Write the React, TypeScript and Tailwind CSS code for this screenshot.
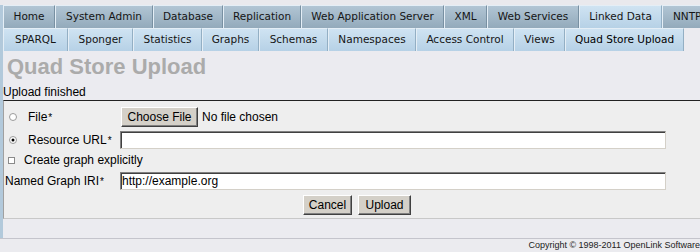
const topTabs = [
  { label: "Home", w: "w-[52px]" },
  { label: "System Admin", w: "w-[98px]" },
  { label: "Database", w: "w-[70px]" },
  { label: "Replication", w: "w-[78px]" },
  { label: "Web Application Server", w: "w-[143px]" },
  { label: "XML", w: "w-[43px]" },
  { label: "Web Services", w: "w-[92px]" },
  { label: "Linked Data", w: "w-[83px]", active: true },
  { label: "NNTP", w: "w-[70px] justify-start pl-[10px]" },
];

const subTabs = [
  { label: "SPARQL", w: "w-[65px]" },
  { label: "Sponger", w: "w-[65px]" },
  { label: "Statistics", w: "w-[69px]" },
  { label: "Graphs", w: "w-[57px]" },
  { label: "Schemas", w: "w-[69px]" },
  { label: "Namespaces", w: "w-[88px]" },
  { label: "Access Control", w: "w-[98px]" },
  { label: "Views", w: "w-[51px]" },
  { label: "Quad Store Upload", w: "w-[119px]", active: true },
];

const light = "bg-gradient-to-b from-[#cfe3f2] to-[#b6d1e6] border-r-[#93afc4]";
const dark = "bg-gradient-to-b from-[#b1c5d4] to-[#93aabb] border-r-[#7890a2]";

function Tab({ label, w, active, sub }: { label: string; w: string; active?: boolean; sub?: boolean }) {
  const tone = sub || active ? light : dark;
  return (
    <div
      className={`${w} ${tone} h-[23px] shrink-0 flex items-center justify-center border-l border-t border-r border-l-[#e4eef6] border-t-[#e4eef6] text-[10.5px] whitespace-nowrap ${
        active && sub ? "text-black" : "text-[#151515]"
      }`}
    >
      {label}
    </div>
  );
}

function Radio({ checked }: { checked?: boolean }) {
  return (
    <svg width="8" height="8" viewBox="0 0 8 8" className="shrink-0">
      <circle cx="4" cy="4" r="3.5" fill="#fff" stroke="#9a9a9a" strokeWidth="1" />
      {checked && <circle cx="4" cy="4" r="1.5" fill="#000" />}
    </svg>
  );
}

// required-field marker
function Req() {
  return <sup className="text-[10px] relative top-[0px] ml-[1px]">*</sup>;
}

const btn =
  "h-[20px] px-0 whitespace-nowrap bg-[#d4d0c8] text-[12px] text-black border border-t-white border-l-white border-r-[#404040] border-b-[#404040] shadow-[inset_-1px_-1px_0_#808080]";
const field =
  "h-[18px] w-[546px] bg-white border border-t-[#808080] border-l-[#808080] border-r-[#d4d0c8] border-b-[#d4d0c8] shadow-[inset_1px_1px_0_#404040] text-[12px] px-[1px] outline-none";

export default function App() {
  return (
    <div className="w-[700px] h-[252px] overflow-hidden bg-[#ebebf0] font-['Liberation_Sans',Arial,sans-serif] text-black">
      <div className="h-[5px] bg-[#e9e9ed]" />
      <div className="h-[233px] border-l-[3px] border-l-[#b2c9db] flex flex-col">
        <div className="flex font-['DejaVu_Sans',Verdana,sans-serif]">
          {topTabs.map((t) => (
            <Tab key={t.label} {...t} />
          ))}
        </div>
        <div className="flex font-['DejaVu_Sans',Verdana,sans-serif]">
          {subTabs.map((t) => (
            <Tab key={t.label} {...t} sub />
          ))}
        </div>

        <h1 className="mt-[4px] pl-[4px] text-[22px] leading-[24px] font-bold text-[#ababab]">Quad Store Upload</h1>
        <div className="mt-[6px] text-[12px] leading-[14px]">Upload finished</div>

        <div className="mt-[1px] bg-[#eeeeee] border-t border-t-[#222] border-l border-l-[#a0a0a0] border-b border-b-[#c8c8c8] pb-[2px] text-[12px]">
          <div className="mt-[5px] h-[22px] flex items-center">
            <div className="w-[116px] flex items-center pl-[5px] gap-[11px]">
              <Radio />
              <span>
                File<Req />
              </span>
            </div>
            <button className={`${btn} ml-[1px] w-[77px]`}>Choose File</button>
            <span className="ml-[4px]">No file chosen</span>
          </div>

          <div className="mt-[1px] h-[22px] flex items-center">
            <div className="w-[116px] flex items-center pl-[5px] gap-[11px]">
              <Radio checked />
              <span>
                Resource URL<Req />
              </span>
            </div>
            <input className={field} defaultValue="" />
          </div>

          <div className="h-[18px] flex items-center pl-[4px] gap-[9px]">
            <span className="w-[7px] h-[7px] bg-white border border-[#8a8a8a] shrink-0" />
            <span>Create graph explicitly</span>
          </div>

          <div className="mt-[1px] h-[22px] flex items-center">
            <div className="w-[116px] pl-[1px]">
              Named Graph IRI<Req />
            </div>
            <input className={field} defaultValue="http://example.org" />
          </div>

          <div className="mt-[2px] h-[22px] flex items-center pl-[299px] gap-[6px]">
            <button className={`${btn} h-[18px] w-[49px]`}>Cancel</button>
            <button className={`${btn} h-[18px] w-[53px]`}>Upload</button>
          </div>
        </div>
      </div>
      <div className="h-[14px] border-t border-t-[#c4c4cc] bg-[#ebebef] text-right text-[9px] leading-[12px] text-[#222] whitespace-nowrap">
        Copyright © 1998-2011 OpenLink Software
      </div>
    </div>
  );
}
